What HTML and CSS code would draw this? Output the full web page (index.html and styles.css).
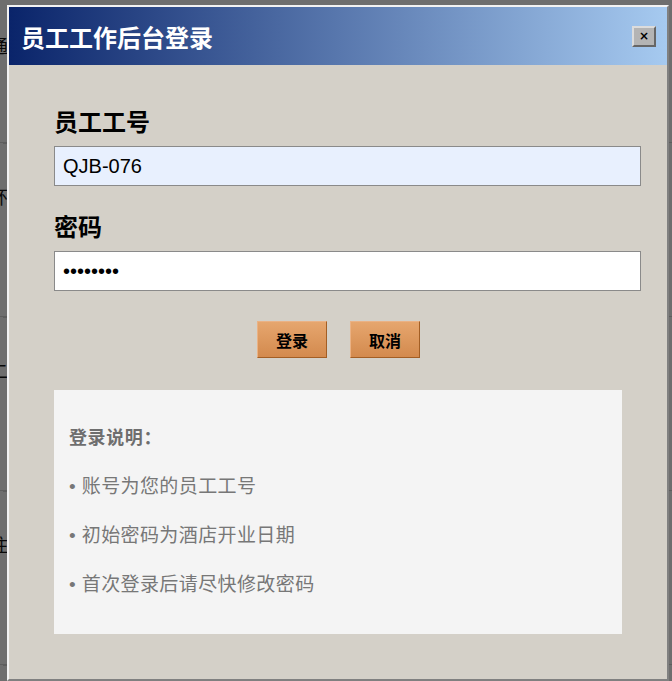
FILE: index.html
```html
<!DOCTYPE html>
<html lang="zh-CN">
<head>
    <meta charset="UTF-8">
    <meta name="viewport" content="width=device-width, initial-scale=1.0">
    <title>员工工作后台登录</title>
    <link rel="stylesheet" href="styles.css">
</head>
<body>

    <!-- 背后的页面，被遮罩挡住 -->
    <div class="page-under">
        <div class="under-row first">通</div>
        <div class="under-row">环</div>
        <div class="under-row">二</div>
        <div class="under-row">住</div>
    </div>
    <div class="mask"></div>

    <div class="dialog">
        <div class="dialog-title">
            <span>员工工作后台登录</span>
            <button class="close-btn">×</button>
        </div>

        <div class="dialog-body">
            <label class="field-label" for="staff-no">员工工号</label>
            <input type="text" id="staff-no" class="field-input autofill" value="QJB-076">

            <label class="field-label" for="staff-pwd">密码</label>
            <input type="password" id="staff-pwd" class="field-input" value="12345678">

            <div class="btn-row">
                <button class="action-btn">登录</button>
                <button class="action-btn">取消</button>
            </div>

            <div class="notice">
                <div class="notice-title">登录说明：</div>
                <div class="notice-item">• 账号为您的员工工号</div>
                <div class="notice-item">• 初始密码为酒店开业日期</div>
                <div class="notice-item">• 首次登录后请尽快修改密码</div>
            </div>
        </div>
    </div>

</body>
</html>
```

FILE: styles.css
```css
body {
    margin: 0;
    height: 681px;
    overflow: hidden;
    font-family: 'Liberation Sans', 'Noto Sans CJK SC', sans-serif;
    background-color: #dcdcdc;
}

.page-under {
    padding-top: 30px;
    font-size: 18px;
    color: #111;
}

.under-row {
    box-sizing: border-box;
    height: 174px;
    padding-top: 40px;
    margin-left: -10px;
    border-bottom: 1px solid #bbb;
    box-shadow: 0 14px 0 -13px #bbb;
}

.under-row.first {
    height: 113px;
    padding-top: 2px;
}

.mask {
    position: absolute;
    top: 0;
    left: 0;
    width: 100%;
    height: 100%;
    background-color: rgba(0, 0, 0, 0.5);
}

.dialog {
    position: absolute;
    top: 5px;
    left: 7px;
    width: 658px;
    height: 672px;
    border: 2px solid;
    border-color: #f2f2f2 #808080 #808080 #f2f2f2;
    background-color: #d4d0c8;
}

.dialog-title {
    height: 58px;
    display: flex;
    align-items: center;
    justify-content: space-between;
    padding: 0 11px 0 12px;
    background: linear-gradient(to right, #0a246a, #a6caf0);
    color: #fff;
    font-size: 24px;
    font-weight: bold;
}

.close-btn {
    width: 24px;
    height: 21px;
    padding: 0;
    background-color: #b4b4b4;
    border: 2px solid;
    border-color: #dcdcdc #666 #666 #dcdcdc;
    font-size: 12px;
    font-weight: bold;
    line-height: 12px;
    color: #000;
    font-family: 'DejaVu Sans', sans-serif;
}

.dialog-body {
    padding: 43px 26px 0 45px;
}

.field-label {
    display: block;
    font-size: 24px;
    font-weight: bold;
    line-height: 30px;
    color: #000;
    margin-bottom: 8px;
}

.field-input {
    display: block;
    box-sizing: border-box;
    width: 587px;
    height: 40px;
    margin: 0 0 27px;
    padding: 0 8px;
    font-family: 'Liberation Sans', sans-serif;
    font-size: 20px;
    color: #000;
    background-color: #fff;
    border: 1px solid #8a8a8a;
}

.field-input.autofill {
    background-color: #e8f0fe;
}

.btn-row {
    display: flex;
    justify-content: center;
    gap: 23px;
    margin: 30px 0 32px;
    padding-right: 18px;
}

.action-btn {
    width: 70px;
    height: 37px;
    background: linear-gradient(#e6a66e, #d38a4e);
    border: 1px solid;
    border-color: #eab285 #a35e24 #a35e24 #eab285;
    font-family: 'Liberation Sans', 'Noto Sans CJK SC', sans-serif;
    font-size: 16px;
    font-weight: bold;
    color: #000;
}

.notice {
    width: 568px;
    height: 244px;
    box-sizing: border-box;
    padding: 36px 15px 0;
    background-color: #f4f4f4;
    color: #6e6e6e;
}

.notice-title {
    font-size: 18px;
    font-weight: bold;
    line-height: 24px;
    letter-spacing: 0.6px;
    margin-bottom: 25px;
}

.notice-item {
    font-size: 19px;
    line-height: 24px;
    margin-bottom: 25px;
    letter-spacing: 0.4px;
    color: #777;
}
```
